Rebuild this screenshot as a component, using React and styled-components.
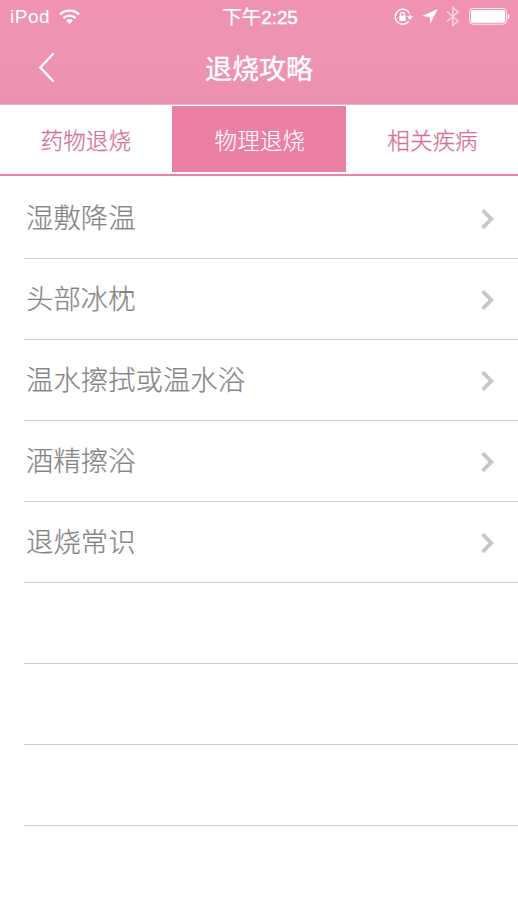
import React from 'react';
import styled, { createGlobalStyle } from 'styled-components';

const GlobalStyle = createGlobalStyle`
  * { box-sizing: border-box; }
  body { margin: 0; background: #fff; }
`;

const Screen = styled.div`
  width: 518px;
  height: 920px;
  overflow: hidden;
  background: #fff;
  font-family: 'Liberation Sans', 'Noto Sans CJK SC', sans-serif;
`;

const Header = styled.header`
  height: 105px;
  background: linear-gradient(#f093b2 0, #ef93b2 60%, #ec90af 100%);
  border-bottom: 1px solid #d3c0c8;
  color: #fff;
`;

const StatusBar = styled.div`
  display: grid;
  grid-template-columns: 1fr auto 1fr;
  align-items: center;
  height: 33px;
  padding: 0 8px 0 10px;
`;

const Carrier = styled.div`
  display: flex;
  align-items: center;
  gap: 9px;
  height: 33px;
  font-size: 19px;
  line-height: 33px;
  letter-spacing: 0.5px;
`;

const Clock = styled.time`
  display: flex;
  height: 33px;
  padding-top: 1px;
  font-size: 19.5px;
  font-weight: 400;
  line-height: 33px;
  -webkit-text-stroke: 0.2px #fff;
`;

const Digits = styled.span`
  font-size: 18.8px;
  -webkit-text-stroke: 0.4px #fff;
`;

const Indicators = styled.div`
  display: flex;
  align-items: center;
  justify-content: flex-end;
  height: 32px;

  svg { flex: none; }
`;

const NavBar = styled.div`
  display: grid;
  grid-template-columns: 80px 1fr 80px;
  align-items: center;
  height: 71px;
`;

const BackButton = styled.button`
  display: flex;
  width: 60px;
  height: 60px;
  padding: 13px 0 0 38px;
  border: 0;
  background: none;
`;

const Title = styled.h1`
  height: 71px;
  margin: 0;
  text-align: center;
  font: 400 27px/70px 'Noto Sans CJK SC', sans-serif;
  -webkit-text-stroke: 0.3px #fff;
`;

const Tabs = styled.nav`
  display: grid;
  grid-template-columns: 171.6px 174.4px 1fr;
  height: 71px;
  padding: 1px 0 2px;
  border-bottom: 2px solid #eb82a5;
`;

const Tab = styled.button`
  height: 66px;
  padding: 2px 0 0 ${(p) => p.$shift || 0}px;
  border: 0;
  background: ${(p) => (p.$active ? '#ec80a4' : '#fff')};
  color: ${(p) => (p.$active ? '#fff' : '#d5709a')};
  font: 300 22.6px/64px 'Noto Sans CJK SC', sans-serif;
  -webkit-text-stroke: ${(p) => (p.$active ? 0.1 : 0.25)}px currentColor;
`;

const List = styled.ul`
  margin: 2px 0 0;
  padding: 0 0 0 24px;
  list-style: none;
`;

const Row = styled.li`
  display: flex;
  align-items: center;
  justify-content: space-between;
  height: 81px;
  padding: 0 24px 0 2px;
  border-bottom: 1px solid #cfcfcf;
  color: #858585;
  font: 300 27.4px/76px 'Noto Sans CJK SC', sans-serif;
`;

const Label = styled.span`
  height: 80px;
  -webkit-text-stroke: 0.2px currentColor;
`;

const Wifi = () => (
  <svg width="21" height="16" viewBox="0 0 21 16" fill="none" stroke="#fff" strokeWidth="2.3">
    <path d="M1 5.4C6.3.4 14.7.4 20 5.4M4.4 9.1C7.9 5.9 13.1 5.9 16.6 9.1" />
    <path d="M7 11.6c2-1.9 5-1.9 7 0L10.500 15z" fill="#fff" stroke="none" />
  </svg>
);

const RotationLock = () => (
  <svg width="20" height="18" viewBox="0 0 20 18" fill="none" stroke="#fff" strokeWidth="1.4">
    <path d="M15.500 5.500A7.500 7.500 0 1 0 14.600 13.500M15.900 6.800v2.500" />
    <path d="M12.900 8.300h6.200l-3.100 3.800z" fill="#fff" stroke="none" />
    <rect x="5.300" y="7.700" width="6.400" height="5.200" rx=".6" fill="#fff" stroke="none" />
    <path d="M6.600 8V6.300a1.900 1.900 0 0 1 3.800 0V8" />
  </svg>
);

const LocationArrow = styled(({ className }) => (
  <svg className={className} width="16" height="15" viewBox="0 0 16 15">
    <path d="M15.800 0 8.400 14.600 7.700 8 0 7z" fill="#fff" />
  </svg>
))`
  margin-left: 8px;
`;

const Bluetooth = styled(({ className }) => (
  <svg className={className} width="14" height="21" viewBox="0 0 14 21" fill="none" stroke="#fff" strokeWidth="1.6">
    <path d="M1 5.500 12 15l-5.200 4.400V1.600L12 6 1 15.500" />
  </svg>
))`
  margin-left: 8px;
  opacity: 0.6;
`;

const Battery = styled(({ className }) => (
  <svg className={className} width="41" height="17" viewBox="0 0 41 17">
    <rect x=".6" y=".6" width="36.800" height="15.600" rx="3.200" fill="none" stroke="#fff" strokeWidth="1" opacity=".8" />
    <rect x="2" y="2" width="34" height="12.800" rx="1.800" fill="#fff" />
    <path d="M38.600 5.500c2.500.8 2.500 5 0 5.800z" fill="#fff" />
  </svg>
))`
  margin-left: 9px;
`;

const BackIcon = () => (
  <svg width="17" height="31" viewBox="0 0 17 31" fill="none" stroke="#fff" strokeWidth="2.3" strokeLinecap="round">
    <path d="M15 2 2.300 15.500 15 29" />
  </svg>
);

const Chevron = styled(({ className }) => (
  <svg className={className} width="14" height="20" viewBox="0 0 14 20" fill="none" stroke="#c7c7cb" strokeWidth="3.900">
    <path d="m2.600 1.200 8.600 8.800-8.600 8.800" />
  </svg>
))`
  margin-top: 2px;
`;

const items = ['湿敷降温', '头部冰枕', '温水擦拭或温水浴', '酒精擦浴', '退烧常识', '', '', ''];

export default function App() {
  return (
    <Screen>
      <GlobalStyle />
      <Header>
        <StatusBar>
          <Carrier>iPod <Wifi /></Carrier>
          <Clock>下午<Digits>2:25</Digits></Clock>
          <Indicators>
            <RotationLock />
            <LocationArrow />
            <Bluetooth />
            <Battery />
          </Indicators>
        </StatusBar>
        <NavBar>
          <BackButton aria-label="返回"><BackIcon /></BackButton>
          <Title>退烧攻略</Title>
        </NavBar>
      </Header>
      <Tabs>
        <Tab>药物退烧</Tab>
        <Tab $active $shift={2}>物理退烧</Tab>
        <Tab $shift={1}>相关疾病</Tab>
      </Tabs>
      <List>
        {items.map((label, i) => (
          <Row key={i}>
            <Label>{label}</Label>
            {label && <Chevron />}
          </Row>
        ))}
      </List>
    </Screen>
  );
}
